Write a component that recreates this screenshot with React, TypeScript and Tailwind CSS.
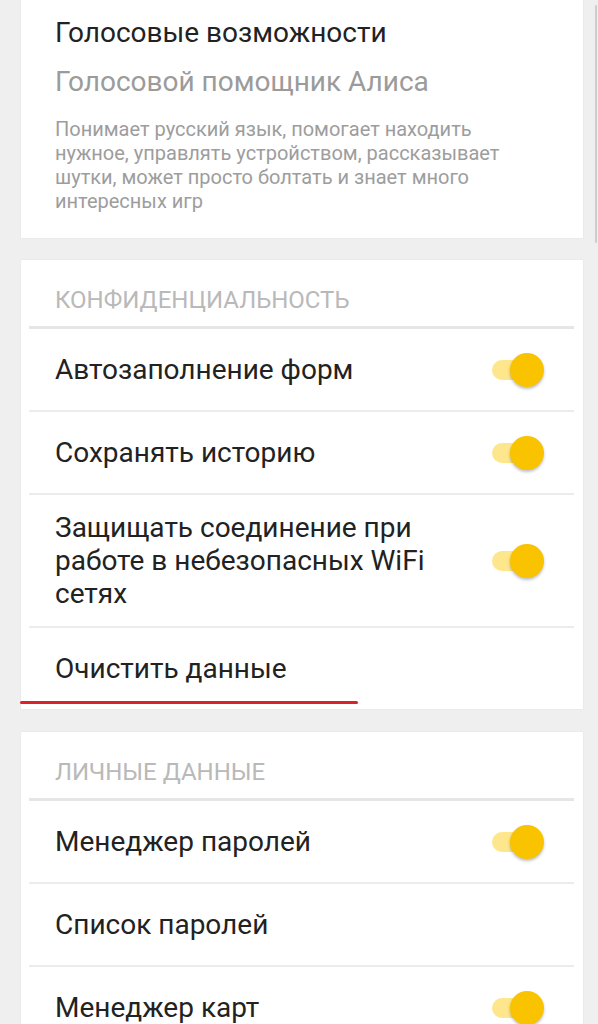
import React from "react";

const font = { fontFamily: 'Roboto, "Noto Sans", sans-serif' };

function Toggle() {
  return (
    <div className="relative w-[52px] h-[34px] shrink-0">
      <div className="absolute left-0 top-[7px] w-[46px] h-[20px] rounded-full bg-[#fde68c]" />
      <div className="absolute right-0 top-0 w-[34px] h-[34px] rounded-full bg-[#f9c300] shadow-[0_2px_3px_rgba(0,0,0,0.25)]" />
    </div>
  );
}

function Divider({ thick }: { thick?: boolean }) {
  return (
    <div
      className={
        thick
          ? "ml-[8px] mr-[9px] h-[3px] bg-[#e6e6e6]"
          : "ml-[8px] mr-[9px] h-[2px] bg-[#ececec]"
      }
    />
  );
}

function Row({
  label,
  toggle,
  tall,
}: {
  label: React.ReactNode;
  toggle?: boolean;
  tall?: boolean;
}) {
  return (
    <div
      className={
        (tall ? "h-[131px] " : "h-[81px] ") +
        "flex items-center justify-between pl-[34px] pr-[39px]"
      }
    >
      <div className="text-[28px] leading-[33px] text-[#222222]">{label}</div>
      {toggle && <Toggle />}
    </div>
  );
}

function Header({ title }: { title: string }) {
  return (
    <div className="h-[66px] pl-[34px] pt-[26px]">
      <div className="text-[24px] leading-[28px] text-[#b9b9b9]">{title}</div>
    </div>
  );
}

export default function App() {
  return (
    <div
      className="relative min-h-screen bg-[#efefef] overflow-hidden"
      style={font}
    >
      <div className="absolute right-[1px] top-[5px] w-[2px] h-[238px] rounded-full bg-[#cdcdcd]" />
      <div className="ml-[21px] mr-[15px] flex flex-col">
        <div className="bg-white pl-[34px] pr-[20px] pt-[17px] pb-[25px] shadow-[0_0_1px_rgba(0,0,0,0.12)]">
          <div className="text-[28px] leading-[32px] text-[#222222]">
            Голосовые возможности
          </div>
          <div className="mt-[17px] text-[28px] leading-[32px] text-[#9b9b9b]">
            Голосовой помощник Алиса
          </div>
          <div className="mt-[19px] text-[20px] leading-[24px] text-[#9d9d9d]">
            Понимает русский язык, помогает находить
            <br />
            нужное, управлять устройством, рассказывает
            <br />
            шутки, может просто болтать и знает много
            <br />
            интересных игр
          </div>
        </div>

        <div className="relative mt-[22px] bg-white shadow-[0_0_1px_rgba(0,0,0,0.12)]">
          <Header title="КОНФИДЕНЦИАЛЬНОСТЬ" />
          <Divider thick />
          <Row label="Автозаполнение форм" toggle />
          <Divider />
          <Row label="Сохранять историю" toggle />
          <Divider />
          <Row
            tall
            toggle
            label={
              <>
                Защищать соединение при
                <br />
                работе в небезопасных WiFi
                <br />
                сетях
              </>
            }
          />
          <Divider />
          <Row label="Очистить данные" />
          <div className="absolute left-[-1px] bottom-[5px] w-[338px] h-[3px] rounded-full bg-[#d8232a]" />
        </div>

        <div className="mt-[23px] bg-white shadow-[0_0_1px_rgba(0,0,0,0.12)]">
          <Header title="ЛИЧНЫЕ ДАННЫЕ" />
          <Divider thick />
          <Row label="Менеджер паролей" toggle />
          <Divider />
          <Row label="Список паролей" />
          <Divider />
          <Row label="Менеджер карт" toggle />
        </div>
      </div>
    </div>
  );
}
